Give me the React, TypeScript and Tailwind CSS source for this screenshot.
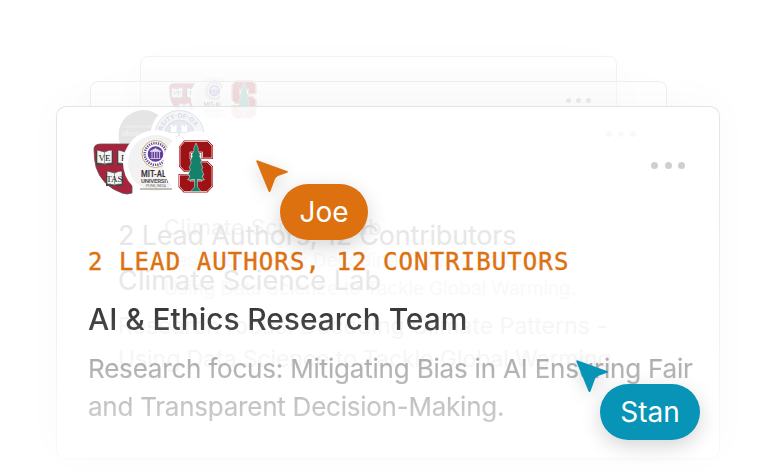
import React from "react";

function Shield() {
  return (
    <g>
      <path d="M94 149q0-5 7-5h31v49q-5 2-10 0-20-7-26-26-2-8-2-18Z" fill="#a8243d" stroke="#555" strokeWidth=".8" />
      {[[97, 151], [118, 151], [107, 172]].map(([x, y], i) => (
        <g key={i}>
          <path d={`M${x - 1} ${y}v14h17v-14Z`} fill="#444" />
          <path d={`M${x} ${y - 1}q4 1 7.500 2 4-2 7.500-2v13q-4 0-7.500 1-4-1-7.500-1Z`} fill="#f2f2f2" stroke="#444" strokeWidth=".6" />
          <path d={`M${x + 7.5} ${y}v14`} stroke="#777" strokeWidth=".7" />
          <text x={x + 7.5} y={y + 9.5} textAnchor="middle" className="font-['Liberation_Serif',serif] text-[9px]" fill="#222">
            {["VE", "RI", "TAS"][i]}
          </text>
        </g>
      ))}
    </g>
  );
}

function Seal() {
  return (
    <g>
      <circle cx="156" cy="163" r="33" fill="#fff" />
      <circle cx="156" cy="163" r="28" fill="#f2f2f2" />
      <circle cx="155.500" cy="154" r="13.500" fill="#fff" stroke="#c3ad70" strokeWidth="1" />
      <circle cx="155.500" cy="154" r="10.800" fill="none" stroke="#67519a" strokeWidth="2.600" strokeDasharray="1.300 1" />
      <circle cx="155.500" cy="154" r="7.800" fill="#63409a" />
      <path d="M150 151.500l5.500-3 5.500 3ZM150.500 158.500h10M152 152v6M154.500 152v6M157 152v6M159.500 152v6" fill="#e7dff5" stroke="#d9cceb" strokeWidth=".9" />
      <text x="141" y="176.500" textLength="43" lengthAdjust="spacingAndGlyphs" className="font-['Roboto',sans-serif] text-[8.800px] font-bold" fill="#3a3333">MIT-ALANDI</text>
      <text x="141" y="182.700" textLength="32" className="font-['Roboto',sans-serif] text-[6px] font-bold" fill="#5d5757">UNIVERSITY</text>
      <text x="146" y="187.300" textLength="20" className="font-['Roboto',sans-serif] text-[4px]" fill="#777">PUNE, INDIA</text>
      <path d="M140 189h32" stroke="#b5b0a6" strokeWidth="1.600" />
    </g>
  );
}

function TreeS() {
  const s = "M184.500 141.500h23l4.500 4.500v12h-9.500v-6h-12.500v7l3 3h14l5 5v19l-5 5.500h-23l-4.500-5v-11.500h10.500v6h12v-7l-3-3h-14.500l-4.500-5v-19Z";
  return (
    <g>
      <circle cx="196" cy="164" r="33" fill="#fff" />
      <path d={s} fill="#9d1215" stroke="#9d1215" strokeWidth="2" />
      <path d={s} fill="none" stroke="#fff" strokeWidth=".7" />
      <path
        d="M196 143L198.500 149 197.800 150 200.500 155 199.500 156 202 161 200.500 162 203 168 201.500 169 204 175 202 176 204.500 180 197.500 179.500V187L201 191.500H190.500L194.500 187V179.500L187.500 180 190 176 188 175 190.500 169 189 168 191.500 162 190 161 192.500 156 191.500 155 194.200 150 193.500 149Z"
        fill="#14816b"
        stroke="#dfe9e4"
        strokeWidth=".5"
      />
    </g>
  );
}

function Avatars({ className }: { className: string }) {
  return (
    <svg viewBox="92 130 130 68" className={className}>
      <Shield />
      <Seal />
      <TreeS />
    </svg>
  );
}

function GhostAvatars() {
  return (
    <svg viewBox="0 0 92 56" className="h-14 w-[92px]">
      <circle cx="25.500" cy="26" r="25" fill="#e5e5e5" />
      <text x="5" y="19" className="font-['Roboto',sans-serif] text-[3.500px]" fill="#f2f2f2">CONSORTIUM FOR</text>
      <text x="4" y="27" className="font-['Roboto',sans-serif] text-[8px] font-bold" fill="#f0f0f0">idem, state</text>
      <circle cx="61.500" cy="26" r="29" fill="#fff" />
      <circle cx="61.500" cy="26" r="24.500" fill="#f5f6f8" stroke="#dfe3ea" strokeWidth="1" />
      <circle cx="61.500" cy="26" r="15" fill="#e6e9ef" stroke="#dce1e9" />
      <path id="ring" d="M44 31a18 18 0 1 1 35 0" fill="none" />
      <text className="font-['Liberation_Sans',sans-serif] text-[6.500px] font-bold" fill="#d5dae3">
        <textPath href="#ring">VERSITY·OF·OX</textPath>
      </text>
      <path d="M53 20v-4h2v2h1.500v-2h2v7H53ZM63.500 23v-7h2v2H67v-2h2v7ZM52 24h8v3h-8ZM62 24h8v3h-8Z" fill="#fff" />
    </svg>
  );
}

function Dots({ className }: { className: string }) {
  return (
    <div className={`flex ${className}`}>
      {[0, 1, 2].map((i) => (
        <span key={i} className="aspect-square h-full rounded-full bg-current" />
      ))}
    </div>
  );
}

function Cursor({ name, fill, pill, place }: { name: string; fill: string; pill: string; place: string }) {
  return (
    <div className={`absolute flex flex-col items-start pl-6 pt-6 ${place}`}>
      <svg viewBox="0 0 34 34" className="absolute left-0 top-0 h-[34px] w-[34px] overflow-visible drop-shadow-[0_4px_8px_rgba(0,0,0,0.15)]">
        <path d="M1.200.3 31 11q2 .9 0 1.800l-9 3.200q-2 .8-3 3l-4.500 12.200q-1 1.800-2 0L.3 1.500Q.1.200 1.200.3Z" fill={fill} />
      </svg>
      <div className={`flex h-14 items-center justify-center rounded-full text-[28px] text-white shadow-[0_6px_20px_rgba(0,0,0,0.17)] ${pill}`}>
        {name}
      </div>
    </div>
  );
}

export default function App() {
  return (
    <main className="relative h-[474px] w-[776px] overflow-hidden whitespace-nowrap bg-white font-['Inter',sans-serif]">
      {/* Rear card */}
      <section className="absolute left-[140px] top-14 h-[300px] w-[477px] rounded-lg border border-[#f2f2f2] bg-gradient-to-b from-white to-[#fafafa] to-20% shadow-[0_10px_50px_rgba(0,0,0,0.02)]">
        <div className="flex items-start justify-between pl-[27px] pr-[25px] pt-4">
          <Avatars className="h-[50px] w-[95px] opacity-20" />
          <Dots className="mt-[25px] h-[5px] gap-[5px] text-[#e1e1e1]" />
        </div>
      </section>

      {/* Middle card */}
      <section className="absolute left-[90px] top-[81px] h-[330px] w-[577px] rounded-lg border border-[#f0f0f0] bg-white/30 shadow-[0_10px_50px_rgba(0,0,0,0.02)]" />

      {/* Front card surface */}
      <section className="absolute left-14 top-[106px] h-[353px] w-[664px] rounded-[10px] bg-gradient-to-b from-[#e3e3e3] to-[#fafafa] p-px shadow-[0_-6px_40px_rgba(0,0,0,0.024)]">
        <div className="h-full rounded-[9px] bg-white" />
      </section>

      {/* Faded contents of the cards underneath */}
      <div className="absolute left-[168px] top-[107px] flex h-4 items-end overflow-hidden">
        <Avatars className="h-[50px] w-[95px] shrink-0 opacity-[0.04]" />
      </div>
      <div className="absolute left-[164px] top-[213px] text-[#f3f3f3]">
        <p className="text-[22px] leading-7 tracking-[0.3px]">Climate Science Lab</p>
        <div className="pt-1.5 text-[19px] leading-7 text-[#f9f9f9]">
          <p className="tracking-[-0.06px]">Research focus: Decoding Climate Patterns -</p>
          <p className="tracking-[-0.08px]">Using Data Science to Tackle Global Warming.</p>
        </div>
      </div>
      <div className="absolute left-[118px] top-[109px] w-[518px]">
        <div className="flex items-start justify-between">
          <GhostAvatars />
          <Dots className="mt-[22px] h-1.5 gap-1.5 text-[#f9f9f9]" />
        </div>
        <p className="mt-12 text-[27px] leading-[45px] tracking-[-0.2px] text-[#e7e7e7]">2 Lead Authors, 12 Contributors</p>
        <p className="text-[27px] leading-[45px] tracking-[0.160px] text-[#e8e8e8]">Climate Science Lab</p>
        <div className="pt-[7px] text-[23px] leading-[33px] text-[#f6f6f6]">
          <p className="tracking-[0.030px]">Research focus: Decoding Climate Patterns -</p>
          <p className="tracking-[-0.07px]">Using Data Science to Tackle Global Warming</p>
        </div>
      </div>

      {/* Front card contents */}
      <article className="absolute left-[88px] top-[130px] w-[597px]">
        <header className="flex items-start justify-between pl-1">
          <Avatars className="h-[68px] w-[130px]" />
          <Dots className="mt-8 h-[7px] gap-[6.500px] text-[#cfcfcf]" />
        </header>
        <p className="mt-11 font-['DejaVu_Sans_Mono',monospace] text-[24px] leading-10 tracking-[1.080px] text-[#dd7110] [-webkit-text-stroke:0.4px_#dd7110]">
          2 LEAD AUTHORS, 12 CONTRIBUTORS
        </p>
        <h1 className="mt-[17px] bg-gradient-to-b from-[#303030] to-[#505050] bg-clip-text text-[30px] font-medium leading-10 tracking-[-0.090px] text-transparent">
          AI &amp; Ethics Research Team
        </h1>
        <div className="mt-[11px] w-max bg-gradient-to-b from-[#a8a8a8] to-[#cfcfcf] bg-clip-text pr-2 text-[26px] leading-[38px] text-transparent [-webkit-text-stroke:0.2px_transparent]">
          <p className="tracking-[-0.195px]">Research focus: Mitigating Bias in AI Ensuring Fair</p>
          <p className="tracking-[-0.24px]">and Transparent Decision-Making.</p>
        </div>
      </article>

      <Cursor name="Joe" fill="#dd7110" place="left-64 top-40" pill="w-[88px] bg-[#dd7110]" />
      <Cursor name="Stan" fill="#0894b6" place="left-[576px] top-[360px]" pill="w-[100px] bg-[#0894b6]" />
    </main>
  );
}
